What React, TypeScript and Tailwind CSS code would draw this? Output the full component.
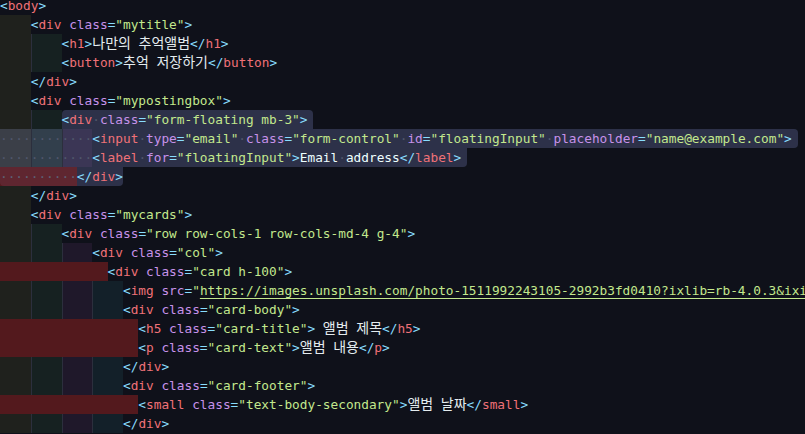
import React from "react";

type Kind = "p" | "t" | "a" | "s" | "u" | "x" | "k" | "d";
type Tok = [Kind, string];

type Line = {
  indent: number;
  src: string;
  sel?: "full" | "content";
  cls?: string;
};

const LINES: Line[] = [
  { indent: 0, src: "<body>" },
  { indent: 4, src: '<div class="mytitle">' },
  { indent: 8, src: "<h1>나만의 추억앨범</h1>" },
  { indent: 8, src: "<button>추억 저장하기</button>" },
  { indent: 4, src: "</div>" },
  { indent: 4, src: '<div class="mypostingbox">' },
  {
    indent: 8,
    src: '<div class="form-floating mb-3">',
    sel: "content",
    cls: "rounded-tl-[4px] rounded-tr-[4px] pr-[6px]",
  },
  {
    indent: 12,
    src: '<input type="email" class="form-control" id="floatingInput" placeholder="name@example.com">',
    sel: "full",
    cls: "rounded-tr-[4px] rounded-br-[4px] pr-[6px]",
  },
  {
    indent: 12,
    src: '<label for="floatingInput">Email address</label>',
    sel: "full",
    cls: "rounded-br-[4px] pr-[6px]",
  },
  { indent: 10, src: "</div>", sel: "full", cls: "rounded-bl-[4px] rounded-br-[4px]" },
  { indent: 4, src: "</div>" },
  { indent: 4, src: '<div class="mycards">' },
  { indent: 8, src: '<div class="row row-cols-1 row-cols-md-4 g-4">' },
  { indent: 12, src: '<div class="col">' },
  { indent: 14, src: '<div class="card h-100">' },
  {
    indent: 16,
    src: '<img src="https://images.unsplash.com/photo-1511992243105-2992b3fd0410?ixlib=rb-4.0.3&ixid=M3wxMjA3fDB8MHxwaG90by1wYWdlfHx8fGVufDB8fHx8fA%3D%3D&auto=format&fit=crop&w=1000&q=80',
  },
  { indent: 16, src: '<div class="card-body">' },
  { indent: 18, src: '<h5 class="card-title"> 앨범 제목</h5>' },
  { indent: 18, src: '<p class="card-text">앨범 내용</p>' },
  { indent: 16, src: "</div>" },
  { indent: 16, src: '<div class="card-footer">' },
  { indent: 18, src: '<small class="text-body-secondary">앨범 날짜</small>' },
  { indent: 16, src: "</div>" },
];

const isHangul = (c: string) => /[\uAC00-\uD7A3\u3131-\u318E]/.test(c);

function tokenize(src: string, sel: boolean): Tok[] {
  const out: Tok[] = [];
  const n = src.length;
  let i = 0;
  const space = (): Tok => (sel ? ["d", "·"] : ["x", " "]);
  while (i < n) {
    if (src[i] === "<") {
      const close = src[i + 1] === "/";
      out.push(["p", close ? "</" : "<"]);
      i += close ? 2 : 1;
      let j = i;
      while (j < n && /[a-zA-Z0-9]/.test(src[j])) j++;
      out.push(["t", src.slice(i, j)]);
      i = j;
      while (i < n && src[i] !== ">") {
        const ch = src[i];
        if (ch === " ") {
          out.push(space());
          i++;
        } else if (ch === "=") {
          out.push(["p", "="]);
          i++;
        } else if (ch === '"') {
          const end = src.indexOf('"', i + 1);
          const inner = end < 0 ? src.slice(i + 1) : src.slice(i + 1, end);
          out.push(["s", '"']);
          out.push([inner.startsWith("http") ? "u" : "s", inner]);
          if (end >= 0) {
            out.push(["s", '"']);
            i = end + 1;
          } else {
            i = n;
          }
        } else {
          let j3 = i;
          while (j3 < n && /[a-zA-Z0-9-]/.test(src[j3])) j3++;
          if (j3 === i) j3 = i + 1;
          out.push(["a", src.slice(i, j3)]);
          i = j3;
        }
      }
      if (i < n) {
        out.push(["p", ">"]);
        i++;
      }
    } else {
      let j = i;
      while (j < n && src[j] !== "<") j++;
      const text = src.slice(i, j);
      let k = 0;
      while (k < text.length) {
        const c = text[k];
        if (c === " ") {
          out.push(space());
          k++;
        } else if (isHangul(c)) {
          let m = k;
          while (m < text.length && isHangul(text[m])) m++;
          out.push(["k", text.slice(k, m)]);
          k = m;
        } else {
          let m = k;
          while (m < text.length && text[m] !== " " && !isHangul(text[m])) m++;
          out.push(["x", text.slice(k, m)]);
          k = m;
        }
      }
      i = j;
    }
  }
  return out;
}

const KIND_CLASS: Record<Kind, string> = {
  p: "text-[#89DDFF]",
  t: "text-[#F07178]",
  a: "text-[#C792EA]",
  s: "text-[#C3E88D]",
  u: "text-[#C3E88D] underline decoration-[#C3E88D] underline-offset-[3px]",
  x: "text-[#EEFFFF]",
  k: "text-[#E4ECEF] text-[14px] leading-none font-['Noto_Sans_CJK_KR',sans-serif]",
  d: "text-[#50566b]",
};

const LEVEL_CLASS = [
  "bg-[rgba(255,255,64,0.07)]",
  "bg-[rgba(127,255,127,0.07)] shadow-[inset_1px_0_0_#2c2f3d]",
  "bg-[rgba(255,127,255,0.07)] shadow-[inset_1px_0_0_#2c2f3d]",
  "bg-[rgba(79,236,236,0.07)] shadow-[inset_1px_0_0_#2c2f3d]",
];

function Indent({ n, sel }: { n: number; sel: boolean }) {
  if (n === 0) return null;
  const fill = (k: number) => (sel ? "·".repeat(k) : " ".repeat(k));
  if (n % 4 !== 0) {
    return (
      <span className="whitespace-pre bg-[rgba(128,32,32,0.6)] text-[#5d6074]">{fill(n)}</span>
    );
  }
  const levels = n / 4;
  return (
    <>
      {Array.from({ length: levels }).map((_, idx) => (
        <span
          key={idx}
          className={`whitespace-pre text-[#50566b] ${LEVEL_CLASS[idx % 4]}`}
        >
          {fill(4)}
        </span>
      ))}
    </>
  );
}

function Content({ src, sel }: { src: string; sel: boolean }) {
  const toks = tokenize(src, sel);
  return (
    <span className="whitespace-pre">
      {toks.map(([k, t], idx) => (
        <span key={idx} className={KIND_CLASS[k]}>
          {t}
        </span>
      ))}
    </span>
  );
}

function CodeLine({ line }: { line: Line }) {
  const selBg = "bg-[rgba(113,124,180,0.31)]";
  if (line.sel === "full") {
    return (
      <div className="flex h-[19px] shrink-0">
        <div className={`flex ${selBg} ${line.cls ?? ""}`}>
          <Indent n={line.indent} sel />
          <Content src={line.src} sel />
        </div>
      </div>
    );
  }
  if (line.sel === "content") {
    return (
      <div className="flex h-[19px] shrink-0">
        <Indent n={line.indent} sel={false} />
        <div className={`flex ${selBg} ${line.cls ?? ""}`}>
          <Content src={line.src} sel />
        </div>
      </div>
    );
  }
  return (
    <div className="flex h-[19px] shrink-0">
      <Indent n={line.indent} sel={false} />
      <Content src={line.src} sel={false} />
    </div>
  );
}

export default function App() {
  return (
    <div className="w-[805px] h-[434px] overflow-hidden bg-[#0F111A] font-['DejaVu_Sans_Mono',monospace] text-[12.785px] leading-[19px] text-[#EEFFFF]">
      <div className="flex flex-col -mt-[4px]">
        {LINES.map((l, i) => (
          <CodeLine key={i} line={l} />
        ))}
      </div>
    </div>
  );
}
